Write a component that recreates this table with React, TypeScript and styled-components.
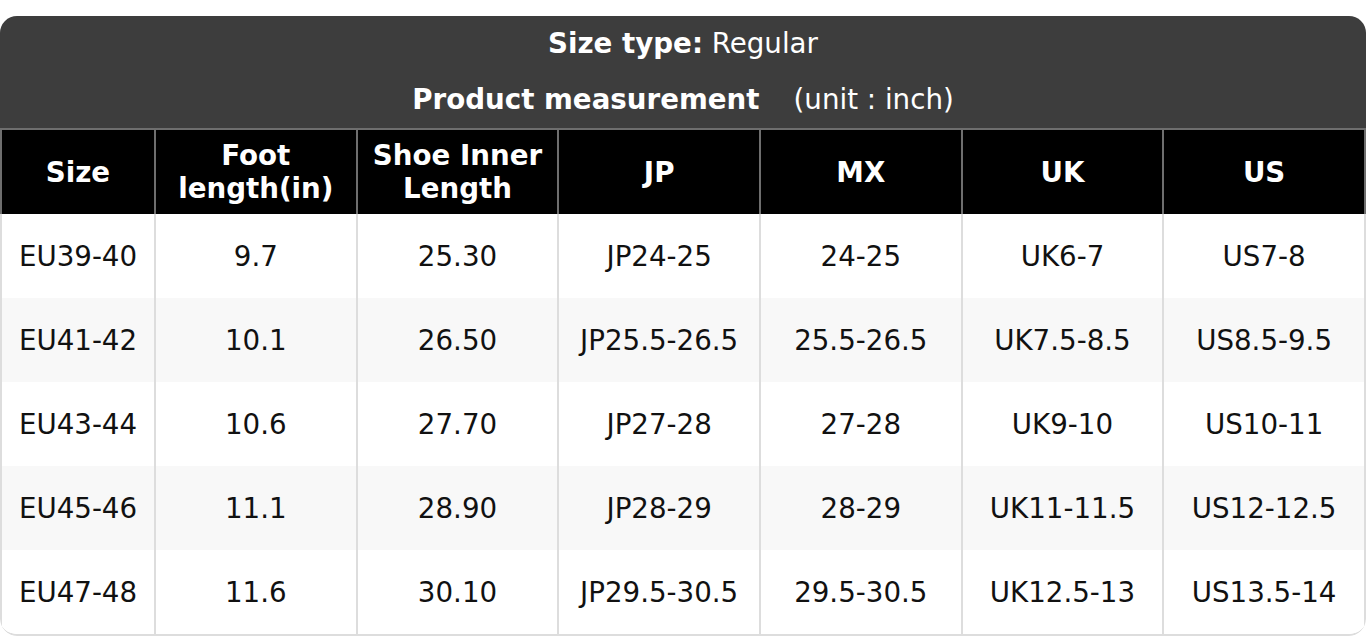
import React from "react";
import styled, { createGlobalStyle } from "styled-components";

const Global = createGlobalStyle`
  html, body { margin: 0; padding: 0; background: #ffffff; }
  body { font-family: "DejaVu Sans", "Liberation Sans", sans-serif; }
  * { box-sizing: border-box; }
`;

const Page = styled.div`
  padding-top: 16px;
  width: 1366px;
`;

const Card = styled.div`
  border-radius: 17px;
  overflow: hidden;
  background: #ffffff;
`;

const Title = styled.div`
  background: #3d3d3d;
  color: #ffffff;
  display: flex;
  flex-direction: column;
  align-items: center;
  padding: 0;
`;

const TitleLine = styled.div`
  height: 56px;
  display: flex;
  align-items: center;
  justify-content: center;
  font-size: 27.7px;
  line-height: 1;
  white-space: pre;
`;

const Strong = styled.span`
  font-weight: 700;
`;

const Unit = styled.span`
  margin-left: 34px;
`;

const Table = styled.div`
  display: grid;
  grid-template-columns: 154px repeat(5, 201.67px) 203.65px;
  border-bottom: 2px solid #dddddd;
  border-bottom-left-radius: 17px;
  border-bottom-right-radius: 17px;
  overflow: hidden;
`;

const HeadCell = styled.div<{ $last?: boolean }>`
  background: #000000;
  color: #ffffff;
  font-weight: 700;
  font-size: 27.7px;
  line-height: 33px;
  height: 86px;
  border-top: 2px solid #6e6e6e;
  border-left: 2px solid #6e6e6e;
  border-right: ${(p) => (p.$last ? "2px solid #6e6e6e" : "none")};
  display: flex;
  align-items: center;
  justify-content: center;
  text-align: center;
  padding: 0 6px;
  white-space: pre-line;
`;

const Cell = styled.div<{ $alt: boolean; $last?: boolean }>`
  background: ${(p) => (p.$alt ? "#f8f8f8" : "#ffffff")};
  color: #111111;
  font-size: 27.7px;
  height: 84px;
  border-left: 2px solid #dddddd;
  border-right: ${(p) => (p.$last ? "2px solid #dddddd" : "none")};
  display: flex;
  align-items: center;
  justify-content: center;
  white-space: nowrap;
`;

const headers = ["Size", "Foot\nlength(in)", "Shoe Inner\nLength", "JP", "MX", "UK", "US"];

const rows = [
  ["EU39-40", "9.7", "25.30", "JP24-25", "24-25", "UK6-7", "US7-8"],
  ["EU41-42", "10.1", "26.50", "JP25.5-26.5", "25.5-26.5", "UK7.5-8.5", "US8.5-9.5"],
  ["EU43-44", "10.6", "27.70", "JP27-28", "27-28", "UK9-10", "US10-11"],
  ["EU45-46", "11.1", "28.90", "JP28-29", "28-29", "UK11-11.5", "US12-12.5"],
  ["EU47-48", "11.6", "30.10", "JP29.5-30.5", "29.5-30.5", "UK12.5-13", "US13.5-14"],
];

export default function App() {
  return (
    <Page>
      <Global />
      <Card>
        <Title>
          <TitleLine>
            <Strong>Size type:</Strong> Regular
          </TitleLine>
          <TitleLine>
            <Strong>Product measurement</Strong>
            <Unit>(unit : inch)</Unit>
          </TitleLine>
        </Title>
        <Table>
          {headers.map((h, i) => (
            <HeadCell key={h} $last={i === headers.length - 1}>
              {h}
            </HeadCell>
          ))}
          {rows.map((r, ri) =>
            r.map((c, ci) => (
              <Cell key={`${ri}-${ci}`} $alt={ri % 2 === 1} $last={ci === r.length - 1}>
                {c}
              </Cell>
            ))
          )}
        </Table>
      </Card>
    </Page>
  );
}
